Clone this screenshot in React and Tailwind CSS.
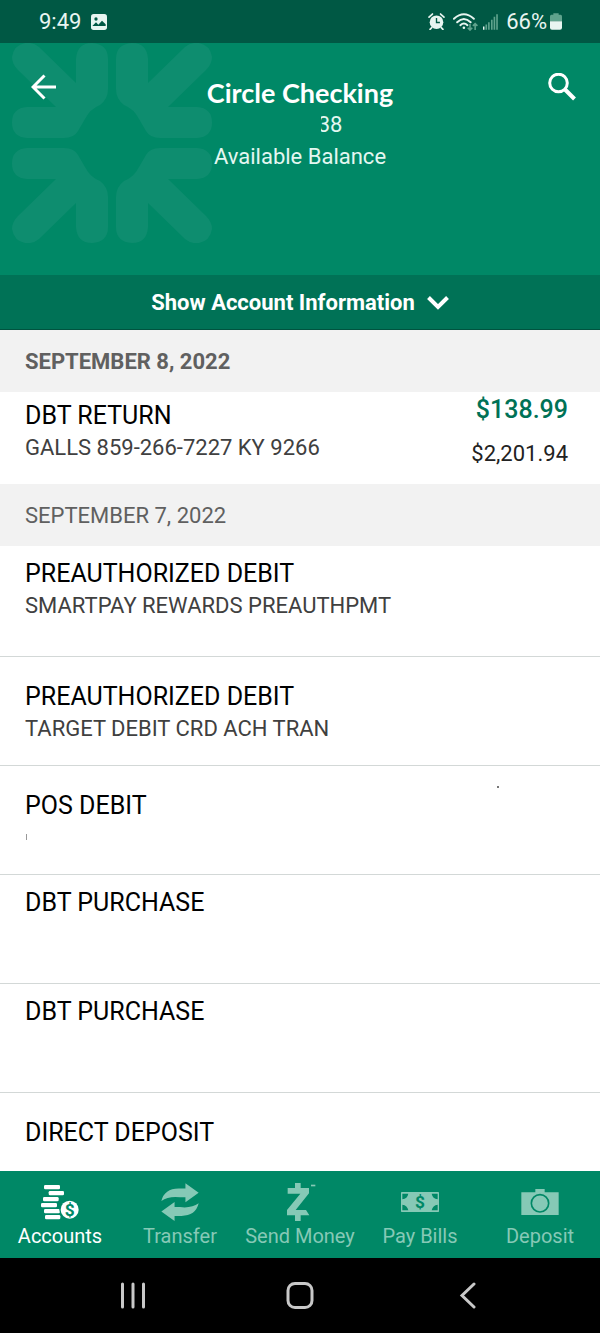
import React from 'react';

const days = [
    {
        date: 'SEPTEMBER 8, 2022',
        current: true,
        items: [
            { title: 'DBT RETURN', detail: 'GALLS 859-266-7227 KY 9266', amount: '$138.99', balance: '$2,201.94', box: 'h-[92px] pt-2' },
        ],
    },
    {
        date: 'SEPTEMBER 7, 2022',
        items: [
            { title: 'PREAUTHORIZED DEBIT', detail: 'SMARTPAY REWARDS PREAUTHPMT', box: 'h-[111px] pt-3' },
            { title: 'PREAUTHORIZED DEBIT', detail: 'TARGET DEBIT CRD ACH TRAN', box: 'h-[109px] pt-6' },
            { title: 'POS DEBIT', marked: true, box: 'h-[109px] pt-6' },
            { title: 'DBT PURCHASE', box: 'h-[109px] pt-3' },
            { title: 'DBT PURCHASE', box: 'h-[109px] pt-3' },
            { title: 'DIRECT DEPOSIT', box: 'h-[78px] pt-6' },
        ],
    },
];

const petal =
    'M48 5H85Q100 6 100 20.500Q100 35 85 36H56L94 73Q100 79 100 86Q98 98 87 100Q79 101 73 96L36 60V84Q35 100 20 100Q4 99 4 84V54Q4 44 12 38Q22 34 27 24L34 12Q38 5 48 5Z';

const Watermark = () => (
    <svg viewBox="-100 -100 200 200" className="absolute left-3 top-0 w-[200px] h-[200px] fill-[#0e8d6f]" aria-hidden="true">
        <path d={petal} />
        <path d={petal} transform="scale(-1 1)" />
        <path d={petal} transform="scale(1 -1)" />
        <path d={petal} transform="scale(-1 -1)" />
    </svg>
);

const StatusBar = () => (
    <div className="h-[43px] bg-[#005844] text-[#e8f5f1] flex items-center justify-between pl-[39px] pr-[38px]">
        <div className="flex items-center gap-[10px]">
            <span className="text-[22px] leading-6">9:49</span>
            <svg viewBox="0 0 48 48" className="w-4 h-4" aria-hidden="true">
                <rect width="48" height="48" rx="8" fill="#e8f5f1" />
                <circle cx="15" cy="15" r="5" fill="#005844" />
                <path d="M4 36L15 25L22 32L33 20L44 31V36Z" fill="#005844" />
            </svg>
        </div>
        <div className="flex items-center">
            <svg viewBox="0 0 50 50" className="w-[17px] h-[17px]" aria-hidden="true">
                <circle cx="25" cy="27" r="20" fill="#e8f5f1" />
                <path d="M3 12L13 3M47 12L37 3M11 43L6 48M39 43L44 48" stroke="#e8f5f1" strokeWidth="5" strokeLinecap="round" />
                <path d="M25 15V28H35" fill="none" stroke="#005844" strokeWidth="4" />
            </svg>
            <svg viewBox="0 0 76 56" className="w-[25px] h-[18px] ml-2" fill="none" aria-hidden="true">
                <path d="M2 18Q33 -10 64 18M12 29Q33 9 54 29M22 38Q33 28 44 38" stroke="#e8f5f1" strokeWidth="6" strokeLinecap="round" />
                <circle cx="33" cy="46" r="4" fill="#e8f5f1" />
                <path d="M52 34V52M45 46L52 53L59 46M68 53V34M61 40L68 33L75 40" stroke="#5fa38d" strokeWidth="5" />
            </svg>
            <svg viewBox="0 0 46 48" className="w-[15px] h-4 ml-[5px]" strokeWidth="5" aria-hidden="true">
                <path d="M2 48V38" stroke="#e8f5f1" />
                <path d="M10 48V32M18 48V25M27 48V17M35 48V8M43 48V0" stroke="#5fa38d" />
            </svg>
            <span className="text-[22px] leading-6 ml-2">66%</span>
            <svg viewBox="0 0 36 50" className="w-3 h-[17px] ml-[3px]" aria-hidden="true">
                <path d="M10 0H26V5H32Q36 5 36 10V24H0V10Q0 5 4 5H10Z" fill="#5fa38d" />
                <path d="M0 24H36V44Q36 50 30 50H6Q0 50 0 44Z" fill="#e8f5f1" />
            </svg>
        </div>
    </div>
);

const Header = () => (
    <header className="relative h-[232px] bg-[#008866] text-white overflow-hidden">
        <Watermark />
        <div className="relative grid grid-cols-[1fr_auto_1fr] items-start px-6 pt-6">
            <button aria-label="Back" className="w-10 h-10 flex items-center justify-center">
                <svg viewBox="0 0 26 26" className="w-[26px] h-[26px]" fill="none" stroke="currentColor" strokeWidth="3" aria-hidden="true">
                    <path d="M25 13H3M13.500 1.500L2 13L13.500 24.500" />
                </svg>
            </button>
            <div className="text-center pt-[10px] text-[#e4f7f1]">
                <h1 className="font-[Lato] font-bold text-[27px] leading-8 text-white">Circle Checking</h1>
                <p className="text-[22px] leading-8 pl-15">
                    <span className="relative">
                        38
                        <span className="absolute left-0 top-0 w-[3px] h-full bg-[#008866]" />
                    </span>
                </p>
                <p className="text-[22px] leading-8">Available Balance</p>
            </div>
            <button aria-label="Search" className="w-10 h-10 flex items-center justify-center justify-self-end -mr-[6px]">
                <svg viewBox="0 0 28 28" className="w-7 h-7" fill="none" stroke="currentColor" strokeWidth="3" aria-hidden="true">
                    <circle cx="10.500" cy="10" r="8.800" />
                    <path d="M16.500 16L26.500 26" strokeWidth="4" />
                </svg>
            </button>
        </div>
    </header>
);

const Transaction = ({ title, detail, amount, balance, marked, box }) => (
    <li className={`relative flex justify-between pl-[25px] pr-8 border-b border-[#d3d8d7] last:border-b-0 ${box}`}>
        <div>
            <h3 className="text-[25px] leading-8 text-black">{title}</h3>
            {detail && <p className="text-[22px] leading-8 text-[#404040]">{detail}</p>}
        </div>
        {amount && (
            <div className="text-right">
                <p className="text-[25px] leading-8 -mt-[6px] font-medium text-[#007256]">{amount}</p>
                <p className="text-[22px] leading-8 mt-3 text-[#222]">{balance}</p>
            </div>
        )}
        {marked && (
            <>
                <span className="absolute left-[26px] top-[68px] w-px h-[6px] bg-[#999]" />
                <span className="absolute right-[101px] top-5 w-[2px] h-[2px] bg-[#777]" />
            </>
        )}
    </li>
);

const AccountsIcon = () => (
    <svg viewBox="0 0 114 108" className="w-[38px] h-9" fill="currentColor" aria-hidden="true">
        <rect x="9" y="3" width="48" height="13" rx="4" />
        <rect x="23" y="21" width="46" height="13" rx="4" />
        <rect x="6" y="39" width="47" height="13" rx="4" />
        <rect x="0" y="57" width="48" height="13" rx="4" />
        <rect x="9" y="75" width="48" height="13" rx="4" />
        <rect x="12" y="93" width="46" height="13" rx="4" />
        <circle cx="86" cy="77" r="31" fill="#008866" />
        <circle cx="86" cy="77" r="27" />
        <text x="86" y="95" textAnchor="middle" fontSize="52" fontWeight="700" fill="#008866">$</text>
    </svg>
);

const TransferIcon = () => (
    <svg viewBox="0 0 112 112" className="w-[38px] h-[38px]" fill="currentColor" aria-hidden="true">
        <path d="M1 53Q10 16 52 16H72V1L111 29L72 57V42H56Q22 38 1 53Z" />
        <path d="M111 60Q102 97 60 97H40V112L1 84L40 56V71H56Q90 75 111 60Z" />
    </svg>
);

const ZelleIcon = () => (
    <svg viewBox="0 0 114 114" className="w-[38px] h-[38px]" fill="currentColor" aria-hidden="true">
        <path d="M42 0H59V15H84V31L44 81H75L85 97H59V114H42V97H18V81L58 32H20V15H42Z" />
        <path d="M90 5H103V10H90Z" />
    </svg>
);

const BillsIcon = () => (
    <svg viewBox="0 0 114 60" className="w-[38px] h-5" fill="currentColor" aria-hidden="true">
        <rect width="114" height="60" rx="2" />
        <path d="M4 5H22Q19 20 4 22ZM110 5H92Q95 20 110 22ZM4 55H22Q19 40 4 38ZM110 55H92Q95 40 110 38Z" fill="#008866" />
        <text x="57" y="47" textAnchor="middle" fontSize="52" fontWeight="700" fill="#008866">$</text>
    </svg>
);

const CameraIcon = () => (
    <svg viewBox="0 0 112 78" className="w-[38px] h-[26px]" aria-hidden="true">
        <path d="M0 10H42V0H70V10H112V78H0Z" fill="currentColor" />
        <circle cx="56" cy="43" r="26" fill="none" stroke="#008866" strokeWidth="5" />
    </svg>
);

const tabs = [
    { label: 'Accounts', Icon: AccountsIcon, active: true },
    { label: 'Transfer', Icon: TransferIcon },
    { label: 'Send Money', Icon: ZelleIcon },
    { label: 'Pay Bills', Icon: BillsIcon },
    { label: 'Deposit', Icon: CameraIcon },
];

const TabBar = () => (
    <nav className="h-[87px] bg-[#008866] grid grid-cols-5 pt-3">
        {tabs.map(({ label, Icon, active }) => (
            <button key={label} className={`flex flex-col items-center ${active ? 'text-white' : 'text-[#86c9b6]'}`}>
                <span className="h-[38px] flex items-center">
                    <Icon />
                </span>
                <span className="text-[20px] leading-[30px] whitespace-nowrap">{label}</span>
            </button>
        ))}
    </nav>
);

const SystemBar = () => (
    <div className="h-[75px] bg-black text-[#c8c8c8] flex items-center justify-between px-[119px]">
        <button aria-label="Recent apps">
            <svg viewBox="0 0 28 28" className="w-7 h-7" stroke="currentColor" strokeWidth="3" strokeLinecap="round" aria-hidden="true">
                <path d="M3.500 2V25M14 2V25M24.500 2V25" />
            </svg>
        </button>
        <button aria-label="Home">
            <svg viewBox="0 0 28 28" className="w-7 h-7" fill="none" stroke="currentColor" strokeWidth="3" aria-hidden="true">
                <rect x="2" y="1.500" width="24" height="24" rx="7" />
            </svg>
        </button>
        <button aria-label="Go back">
            <svg viewBox="0 0 28 28" className="w-7 h-7" fill="none" stroke="currentColor" strokeWidth="3" strokeLinecap="round" aria-hidden="true">
                <path d="M21 2L9 13.500L21 25" />
            </svg>
        </button>
    </div>
);

export default function App() {
    return (
        <div className="w-full bg-white font-[Roboto,sans-serif]">
            <StatusBar />
            <Header />
            <button className="w-full h-[55px] pt-[2px] bg-[#007256] border-b border-[#00533f] text-white flex items-center justify-center gap-3">
                <span className="text-[22px] leading-8 font-bold">Show Account Information</span>
                <svg viewBox="0 0 22 14" className="w-[22px] h-[14px]" fill="none" stroke="currentColor" strokeWidth="4" aria-hidden="true">
                    <path d="M1.500 1.500L11 11L20.500 1.500" />
                </svg>
            </button>
            <main>
                {days.map((day) => (
                    <section key={day.date}>
                        <h2 className={`h-[62px] pt-[2px] flex items-center bg-[#f2f2f2] px-[25px] text-[22px] leading-8 text-[#606060] ${day.current ? 'font-bold' : ''}`}>
                            {day.date}
                        </h2>
                        <ul>
                            {day.items.map((item, i) => (
                                <Transaction key={i} {...item} />
                            ))}
                        </ul>
                    </section>
                ))}
            </main>
            <TabBar />
            <SystemBar />
        </div>
    );
}
